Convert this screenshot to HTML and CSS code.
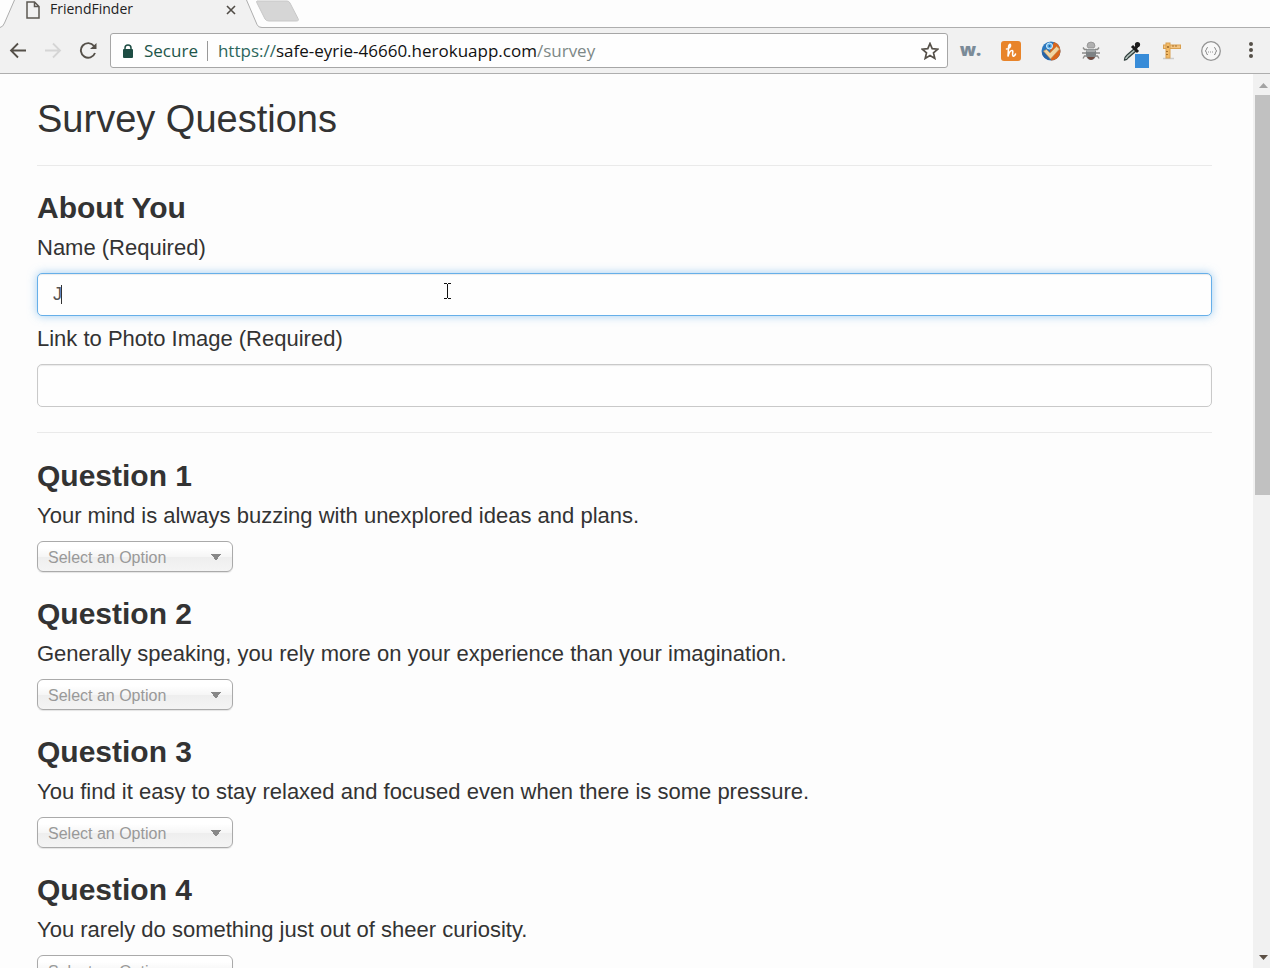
FILE: index.html
```html
<!DOCTYPE html>
<html lang="en">
<head>
<meta charset="utf-8">
<title>FriendFinder</title>
<link rel="stylesheet" href="styles.css">
</head>
<body class="browser">
<header class="chrome">
  <div class="tabstrip">
    <svg class="tab-shape" width="320" height="28" viewBox="0 0 320 28" aria-hidden="true">
      <path d="M0 28V27Q3 27 4 24L14.500 0H246.500L257 24Q258 27.500 262 27.500V28z" fill="#f1f1f1"/>
      <path d="M0 27.500Q3 27 4.500 23L14.500 0M246.500 0L257 24.500Q258 27.500 262 27.500" fill="none" stroke="#aeaeae"/>
      <path d="M257 1H287Q289 1 290 3L298 18.500Q299.500 21 296 21H269Q266 21 265 19L257 3Q256 1 257 1z" fill="#d6d6d6" stroke="#c8c8c8"/>
    </svg>
    <div class="tab">
      <svg width="14" height="18" viewBox="0 0 14 18" fill="none" stroke="#5c5852" stroke-width="1.500" aria-hidden="true"><path d="M1 1H8.500L13 5.500V17H1zM8.500 1V5.500H13"/></svg>
      <span class="tab-title">FriendFinder</span>
      <button class="icon-button tab-close" aria-label="Close tab"><svg width="10" height="10" viewBox="0 0 10 10" stroke="#504c46" stroke-width="1.600"><path d="M1 1L9 9M9 1L1 9"/></svg></button>
    </div>
  </div>
  <div class="toolbar">
    <nav class="nav-buttons">
      <button class="icon-button" aria-label="Back"><svg width="18" height="18" viewBox="0 0 18 18" fill="none" stroke="#555049" stroke-width="1.800"><path d="M17 8.500H2M9 1.500L2 8.500L9 15.500"/></svg></button>
      <button class="icon-button" aria-label="Forward"><svg width="18" height="18" viewBox="0 0 18 18" fill="none" stroke="#d5d5d5" stroke-width="1.800"><path d="M1 8.500H16M9 1.500L16 8.500L9 15.500"/></svg></button>
      <button class="icon-button" aria-label="Reload"><svg width="18" height="18" viewBox="0 0 18 18" fill="none" stroke="#555049" stroke-width="1.900"><path d="M15 4A7.300 7.300 0 1 0 16 11"/><path d="M17.500 1V7H11z" fill="#555049" stroke="none"/></svg></button>
    </nav>
    <div class="address">
      <svg width="12" height="14" viewBox="0 0 12 14" aria-hidden="true"><rect x="1" y="5" width="10" height="9" rx="1" fill="#1d4c43"/><path d="M3 6V4A3 3 0 0 1 9 4V6" fill="none" stroke="#1d4c43" stroke-width="1.500"/></svg>
      <span class="secure">Secure</span>
      <span class="url"><span class="scheme">https://</span>safe-eyrie-46660.herokuapp.com<span class="path">/survey</span></span>
      <button class="icon-button" aria-label="Bookmark this page"><svg width="18" height="18" viewBox="0 0 18 18" fill="none" stroke="#555049" stroke-width="1.700"><path d="M9 1.500L11.200 6.700L16.700 7.200L12.500 10.900L13.800 16.400L9 13.500L4.200 16.400L5.500 10.900L1.300 7.200L6.800 6.700z"/></svg></button>
    </div>
    <div class="extensions">
      <button class="icon-button wordmark">w.</button>
      <button class="icon-button" aria-label="Coupons"><svg width="20" height="20" viewBox="0 0 20 20"><rect width="20" height="20" rx="3" fill="#e8842a"/><path d="M5.500 8C8 8 10 6 9.500 4C9 2.500 7.500 4 7.500 7L7 15.500C8 11.500 9.500 9.500 11 9.500C13 9.500 10.500 14 12 15C13 15.500 14 14.500 14.500 13" fill="none" stroke="#fff" stroke-width="1.600" stroke-linecap="round"/></svg></button>
      <button class="icon-button" aria-label="Checker"><svg width="20" height="20" viewBox="0 0 20 20"><circle cx="10" cy="10" r="9.500" fill="#2c77bd"/><path d="M13 1A9.500 9.500 0 0 1 10 19.500L9 10z" fill="#d9651c"/><path d="M1 12A9.500 9.500 0 0 0 8 19L10 14L3 9z" fill="#2864a6"/><circle cx="8.500" cy="5" r="3" fill="#5aaee8" stroke="#d6f0ff"/><circle cx="8.500" cy="5" r="1" fill="#205c9b"/><path d="M2.500 10L5.500 8.500L9 12L15.500 5.500L18.500 8L9.500 18z" fill="#f0d5a4" stroke="#c3965b" stroke-width=".7"/></svg></button>
      <button class="icon-button" aria-label="Debugger"><svg width="20" height="20" viewBox="0 0 20 20"><path d="M6 8.500H3.500L2 6.500M14 8.500H16.500L18 6.500M5 12H1M15 12H19M6 15H3.500L2 17.500M14 15H16.500L18 17.500" fill="none" stroke="#8b8b89" stroke-width="1.400"/><path d="M6 5A4 4 0 0 1 14 5L13 7H7z" fill="#b0b0b0" stroke="#888" stroke-width=".7"/><path d="M6 8H14Q15.500 10 15 14Q14 19 10 19T5 14Q4.500 10 6 8z" fill="#7d8284"/><path d="M6 8.500H14V11H5.500z" fill="#a5a9aa"/><path d="M6 16H14Q12 19 10 19T6 16z" fill="#70483d"/></svg></button>
      <button class="icon-button" aria-label="Color picker"><svg class="picker" width="20" height="20" viewBox="0 0 20 20"><g transform="translate(2 0)"><path d="M11 8L4 14Q1.500 16 1.500 19Q4 19 5.500 16.500L13 10" fill="#b7c4bf" stroke="#31403e" stroke-width="1.300"/><path d="M9 5L15 11M12 8L15 4" stroke="#1c1c1c" stroke-width="3"/><circle cx="14.500" cy="3.500" r="2.600" fill="#1c1c1c"/><rect x="12" y="13" width="14" height="14" fill="#388cd8"/></g></svg></button>
      <button class="icon-button" aria-label="Ruler"><svg width="20" height="20" viewBox="0 0 20 20"><path d="M2 17.500H13" stroke="#ccc" stroke-width="1.500"/><rect x="2.500" y="4" width="17" height="3.500" fill="#f3c583" stroke="#d9a050"/><rect x="5" y="2" width="4" height="15" fill="#f3bb67" stroke="#d9a050"/><path d="M12 4V6M15 4V6M5 10.500H7M5 13.500H7" stroke="#a9732f"/><circle cx="7" cy="6" r="1" fill="#996426"/></svg></button>
      <button class="icon-button" aria-label="Code formatter"><svg width="20" height="20" viewBox="0 0 20 20" fill="none" stroke="#949494"><circle cx="10" cy="10" r="9.300" fill="#f8f8f8" stroke-width="1.300"/><path d="M7 6.500Q5.500 6.500 5.500 8T4 10Q5.500 10 5.500 12T7 13.500M13 6.500Q14.500 6.500 14.500 8T16 10Q14.500 10 14.500 12T13 13.500"/><path d="M7 11H13" stroke-dasharray="1 1"/></svg></button>
      <button class="icon-button menu" aria-label="Menu"><svg width="4" height="18" viewBox="0 0 4 18" fill="#555049"><circle cx="2" cy="2" r="2"/><circle cx="2" cy="8" r="2"/><circle cx="2" cy="14" r="2"/></svg></button>
    </div>
  </div>
</header>
<div class="viewport">
  <main class="page">
    <h1 class="page-title">Survey Questions</h1>
    <hr class="rule">
    <section class="about">
      <h2 class="heading">About You</h2>
      <label class="prompt" for="name">Name (Required)</label>
      <div class="field"><input class="text-input active" id="name" type="text" value="J"><span class="caret"></span>
        <svg class="pointer" width="8" height="16" viewBox="0 0 8 16" fill="#111" shape-rendering="crispEdges" aria-hidden="true"><path d="M0 0H3V1H0zM4 0H7V1H4zM3 1H4V15H3zM0 15H3V16H0zM4 15H7V16H4z"/></svg>
      </div>
      <label class="prompt" for="photo">Link to Photo Image (Required)</label>
      <div class="field"><input class="text-input" id="photo" type="text"></div>
    </section>
    <hr class="rule">
    <div class="questions">
      <section class="question">
        <h2 class="heading">Question 1</h2>
        <label class="prompt" for="q1">Your mind is always buzzing with unexplored ideas and plans.</label>
        <select class="choice" id="q1"><option>Select an Option</option></select>
      </section>
      <section class="question">
        <h2 class="heading">Question 2</h2>
        <label class="prompt" for="q2">Generally speaking, you rely more on your experience than your imagination.</label>
        <select class="choice" id="q2"><option>Select an Option</option></select>
      </section>
      <section class="question">
        <h2 class="heading">Question 3</h2>
        <label class="prompt" for="q3">You find it easy to stay relaxed and focused even when there is some pressure.</label>
        <select class="choice" id="q3"><option>Select an Option</option></select>
      </section>
      <section class="question">
        <h2 class="heading">Question 4</h2>
        <label class="prompt" for="q4">You rarely do something just out of sheer curiosity.</label>
        <select class="choice" id="q4"><option>Select an Option</option></select>
      </section>
    </div>
  </main>
  <div class="scrollbar" aria-hidden="true">
    <svg class="arrow" width="17" height="21" viewBox="0 0 17 21"><path d="M6 14L10.500 9L15 14z" fill="#a3a3a3"/></svg>
    <div class="track"><div class="thumb"></div></div>
    <svg class="arrow" width="17" height="21" viewBox="0 0 17 21"><path d="M6 8H15L10.500 13z" fill="#5c5046"/></svg>
  </div>
</div>
</body>
</html>
```

FILE: styles.css
```css
* { box-sizing: border-box; }

.browser {
  display: flex;
  flex-direction: column;
  height: 100vh;
  margin: 0;
  overflow: hidden;
  background: #fdfdfd;
  color: #333;
  font-family: "Liberation Sans", Arial, sans-serif;
}

.icon-button {
  display: flex;
  align-items: center;
  justify-content: center;
  flex: none;
  padding: 0;
  border: 0;
  background: none;
}

/* Browser frame */
.chrome { font-family: "Open Sans", "Noto Sans", sans-serif; }

.tabstrip {
  position: relative;
  height: 28px;
  border-bottom: 1px solid #aeaeae;
}

.tab-shape {
  position: absolute;
  top: 0;
  left: 0;
}

.tab {
  position: relative;
  display: flex;
  align-items: center;
  gap: 10px;
  width: 236px;
  height: 20px;
  padding-left: 26px;
  color: #222;
  font-size: 14px;
  line-height: 18px;
}

.tab-title { padding-bottom: 2px; }
.tab-close { margin-left: auto; }

.toolbar {
  display: flex;
  align-items: center;
  height: 46px;
  padding: 0 17px 0 9px;
  border-bottom: 1px solid #aeaeae;
  background: #f1f1f1;
}

.nav-buttons {
  display: flex;
  gap: 17px;
  margin-right: 13px;
}

.address {
  display: flex;
  align-items: center;
  flex: 1;
  height: 35px;
  padding: 0 8px 0 11px;
  border: 1px solid #a6a6a6;
  border-radius: 3px;
  background: #fefefe;
  color: #111;
  font-size: 17px;
}

.secure {
  margin-left: 10px;
  padding-right: 9px;
  border-right: 1px solid #999;
  color: #1d5549;
  line-height: 20px;
}

.url {
  flex: 1;
  margin-left: 10px;
}

.scheme { color: #2d665c; }
.path { color: #7d8886; }

.extensions {
  display: flex;
  align-items: center;
  gap: 20px;
  margin-left: 12px;
}

.wordmark {
  width: 21px;
  padding-bottom: 4px;
  color: #7b8b98;
  font-family: inherit;
  font-size: 18px;
  font-weight: 800;
}

.picker { overflow: visible; }
.menu { margin-left: 8px; }

/* Survey page */
.viewport {
  display: flex;
  flex: 1;
  min-height: 0;
}

.page {
  flex: 1;
  padding: 24px 41px 0 37px;
  overflow: hidden;
}

.page-title {
  margin: 0;
  font-size: 38px;
  font-weight: 400;
  line-height: 42px;
}

.rule {
  margin: 25px 0;
  border: 0;
  border-top: 1px solid #eaeaea;
}

.heading {
  margin: 0 0 11px;
  font-size: 30px;
  font-weight: 700;
  line-height: 33px;
}

.prompt {
  display: block;
  margin-bottom: 13px;
  font-size: 22px;
  line-height: 25px;
}

.field {
  position: relative;
  margin-bottom: 10px;
}

.text-input {
  display: block;
  width: 100%;
  height: 43px;
  padding: 0 15px;
  border: 1px solid #c9c9c9;
  border-radius: 5px;
  outline: 0;
  background: #fefefe;
  box-shadow: inset 0 1px 1px rgba(0, 0, 0, .08);
  color: #555;
  font-family: inherit;
  font-size: 18px;
}

.text-input.active {
  border-color: #66afe9;
  box-shadow: inset 0 1px 1px rgba(0, 0, 0, .08), 0 0 10px rgba(102, 175, 233, .6);
}

.caret {
  position: absolute;
  top: 12px;
  left: 24px;
  width: 1px;
  height: 19px;
  background: #333;
}

.pointer {
  position: absolute;
  top: 10px;
  left: 407px;
}

.about .field:last-child { margin-bottom: 0; }

.questions { margin-top: 26px; }
.question { margin-bottom: 25px; }

.choice {
  display: block;
  width: 196px;
  height: 31px;
  padding: 2px 10px 0;
  border: 1px solid #aaa;
  border-radius: 6px;
  appearance: none;
  background:
    linear-gradient(to bottom right, #888 50%, transparent 50%) 178px 12px / 5px 7px no-repeat,
    linear-gradient(to bottom left, #888 50%, transparent 50%) 173px 12px / 5px 7px no-repeat,
    linear-gradient(#fff 20%, #f6f6f6 50%, #eee 52%, #f4f4f4 100%);
  box-shadow: 0 1px 1px rgba(0, 0, 0, .1);
  color: #999;
  font-family: inherit;
  font-size: 16px;
}

/* Page scrollbar */
.scrollbar {
  display: flex;
  flex-direction: column;
  width: 17px;
  background: #f1f1f1;
}

.arrow { flex: none; }
.track { flex: 1; }

.thumb {
  height: 47%;
  margin-left: 2px;
  background: #c1c1c1;
}
```
